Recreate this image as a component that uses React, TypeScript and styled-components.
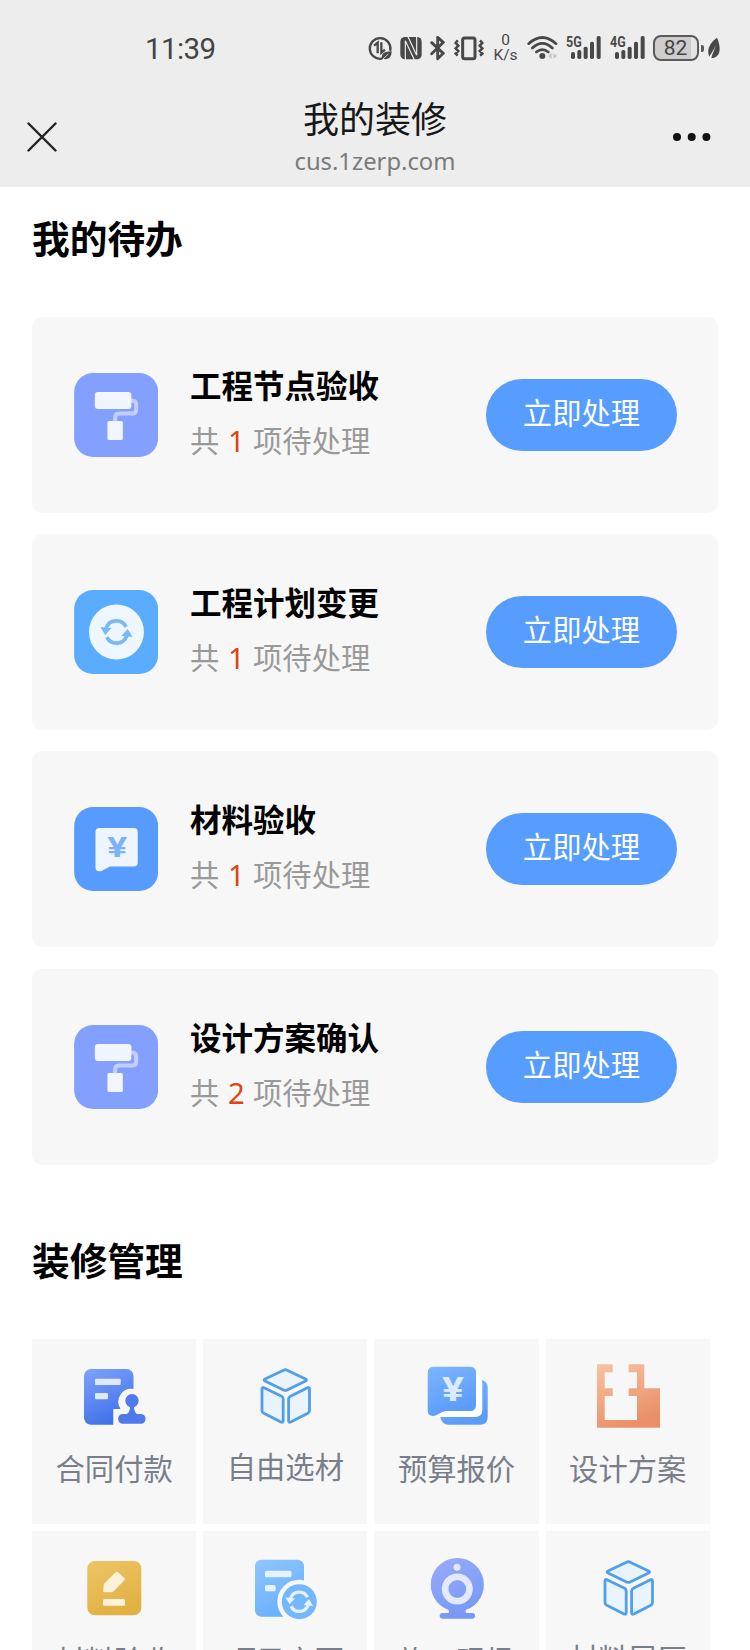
import React from "react";
import styled, { createGlobalStyle } from "styled-components";

const GlobalStyle = createGlobalStyle`
  * { box-sizing: border-box; }
  body {
    margin: 0;
    background: #fff;
    font-family: "Noto Sans", "Noto Sans CJK SC", sans-serif;
  }
  svg { display: block; flex: none; }
`;

const Screen = styled.div`
  width: 750px;
  height: 1650px;
  overflow: hidden;
  background: #fff;
`;

const Header = styled.header`
  height: 187px;
  background: #ededed;
`;

const StatusBar = styled.div`
  height: 96px;
  padding: 0 29.5px 0 145px;
  display: flex;
  align-items: center;
  justify-content: space-between;
`;

const Clock = styled.time`
  padding-top: 2px;
  font: 400 29.5px/34px Roboto, sans-serif;
  letter-spacing: -0.6px;
  color: #444;
`;

const StatusIcons = styled.div`
  display: flex;
  align-items: center;
`;

const Glyph = styled.svg<{ $gap?: number }>`
  margin-left: ${(p) => p.$gap ?? 8}px;
  color: #484848;
`;

const Speed = styled.div`
  width: 23px;
  margin-left: 10px;
  display: flex;
  flex-direction: column;
  align-items: center;
  font: 400 15.5px/15px Roboto, sans-serif;
  color: #484848;
`;

const Battery = styled.div`
  width: 46px;
  height: 26px;
  margin-left: 8px;
  border: 2px solid #5a5a5a;
  border-radius: 8px;
  background: linear-gradient(90deg, #cdcdcd 86%, #e4e4e4 86%);
  font: 400 21px/23px Roboto, sans-serif;
  color: #444;
  text-align: center;
`;

const BatteryTip = styled.span`
  width: 3px;
  height: 7px;
  margin-left: 2px;
  border-radius: 0 2px 2px 0;
  background: #5a5a5a;
`;

const NavBar = styled.nav`
  height: 81px;
  padding: 0 38px 0 27px;
  display: grid;
  grid-template-columns: 40px 1fr 30px;
  grid-template-rows: 81px;
  align-items: center;
`;

const MoreButton = styled.div`
  display: flex;
  justify-content: flex-end;
`;

const NavTitle = styled.div`
  display: flex;
  flex-direction: column;
  align-items: center;
  padding: 4px 0 0 1px;
`;

const PageName = styled.h1`
  margin: 0;
  font-size: 36px;
  line-height: 44px;
  font-weight: 400;
  color: #171717;
`;

const Host = styled.div`
  font-size: 23.8px;
  line-height: 38px;
  color: #7b7b7b;
`;

const SectionTitle = styled.h2<{ $top: number }>`
  margin: ${(p) => p.$top}px 0 0 32px;
  font-size: 37.7px;
  line-height: 50px;
  font-weight: 700;
  color: #000;
`;

const TodoList = styled.div`
  margin: 52.5px 32px 0;
  display: flex;
  flex-direction: column;
  gap: 21.2px;
`;

const TodoCard = styled.article`
  height: 196.2px;
  padding: 0 41.3px 0 41.7px;
  display: flex;
  align-items: center;
  border-radius: 10px;
  background: #f7f7f7;
`;

const TodoText = styled.div`
  flex: 1;
  margin: -3px 0 0 32px;
`;

const TodoTitle = styled.h3`
  margin: 0;
  font-size: 31.5px;
  line-height: 44px;
  font-weight: 700;
  color: #000;
`;

const TodoCount = styled.p`
  margin: 11px 0 0;
  font-size: 29.3px;
  line-height: 44px;
  color: #999;
`;

const Count = styled.span`
  margin: 0 8.3px 0 8.7px;
  color: #dc4414;
`;

const ActionButton = styled.button`
  width: 190.5px;
  height: 72px;
  padding: 0 0 4px;
  border: 0;
  border-radius: 36px;
  background: #569dff;
  color: #fff;
  font: 400 29.3px/44px "Noto Sans", "Noto Sans CJK SC", sans-serif;
`;

const Grid = styled.div`
  margin: 53px 0 0 32px;
  display: grid;
  grid-template-columns: repeat(4, 164.3px);
  grid-auto-rows: 185.4px;
  gap: 6.9px;
`;

const Tile = styled.div`
  padding-top: 25.3px;
  display: flex;
  flex-direction: column;
  align-items: center;
  background: #f7f7f7;
`;

const TileLabel = styled.span<{ $raised?: boolean }>`
  margin-top: ${(p) => (p.$raised ? 17 : 19)}px;
  font-size: 29.3px;
  line-height: 44px;
  color: #787e8a;
`;

const Signal = ({ label, gap }: { label: string; gap: number }) => (
  <Glyph $gap={gap} width="35" height="28" viewBox="0 0 105 84" fill="currentColor">
    <text x="0" y="40" fontFamily="Roboto" fontWeight="700" fontSize="43" textLength="47" lengthAdjust="spacingAndGlyphs">{label}</text>
    <rect x="15" y="54" width="12" height="21" rx="5" />
    <rect x="34" y="48" width="12" height="27" rx="5" />
    <rect x="53" y="38" width="12" height="37" rx="5" />
    <rect x="72" y="23" width="12" height="52" rx="5" />
    <rect x="92" y="6" width="12" height="69" rx="5" />
  </Glyph>
);

const StatusGlyphs = () => (
  <StatusIcons>
    <Glyph $gap={0} width="25" height="28" viewBox="0 0 75 84" fill="none" stroke="currentColor" strokeWidth="7">
      <path d="M41 74A31 31 0 1 1 67 48" strokeLinecap="round" />
      <path d="M18 35l11-9v32M40 25v31l11-9" />
      <path d="M42 76c-3-19 7-23 29-24c0 19-11 27-26 22z" fill="currentColor" stroke="none" />
      <path d="M43 77l18-17" stroke="#ededed" strokeWidth="2.500" />
    </Glyph>
    <Glyph $gap={7} width="22" height="28" viewBox="0 0 66 84">
      <rect x="1" y="9" width="64" height="67" rx="14" fill="currentColor" />
      <path d="M16 77V20L43 77M50 8V64L24 8" fill="none" stroke="#ededed" strokeWidth="3.500" />
    </Glyph>
    <Glyph width="16" height="28" viewBox="0 0 48 84" fill="none" stroke="currentColor" strokeWidth="8.500" strokeLinejoin="round" strokeLinecap="round">
      <path d="M5 26l35 32l-17 16V10l17 15L5 59" />
    </Glyph>
    <Glyph width="30" height="28" viewBox="0 0 90 84" fill="none" stroke="currentColor" strokeWidth="7">
      <rect x="26" y="12" width="37" height="62" rx="6" strokeWidth="9" />
      <path d="M11 19l-6 8l8 8l-8 8l8 8l-8 8l6 6M78 19l7 8l-8 8l8 8l-8 8l8 8l-7 6" strokeWidth="7.500" />
    </Glyph>
    <Speed>
      <span>0</span>
      <span>K/s</span>
    </Speed>
    <Glyph $gap={10} width="31" height="28" viewBox="0 0 93 84" fill="none" stroke="currentColor" strokeWidth="8" strokeLinecap="round">
      <path d="M5 29Q46-8 87 29M16 42Q46 14 76 42M28 54Q46 40 64 54" />
      <circle cx="46" cy="66" r="9" fill="currentColor" stroke="none" />
      <path d="M74 57v18l-11-9zM79 57v18l11-9z" fill="#c4c4c4" stroke="none" />
    </Glyph>
    <Signal label="5G" gap={8} />
    <Signal label="4G" gap={8.5} />
    <Battery>82</Battery>
    <BatteryTip />
    <Glyph $gap={4} width="13" height="28" viewBox="0 0 39 84">
      <path d="M27 11C5 26-5 49 4 68C9 60 17 47 24 33C19 48 13 59 10 72C34 72 43 48 27 11z" fill="currentColor" />
    </Glyph>
  </StatusIcons>
);

const cardIcon = { width: 84.3, height: 84, viewBox: "0 0 84 84" };

const RollerIcon = () => (
  <svg {...cardIcon}>
    <rect width="84" height="84" rx="19" fill="#83a0ff" />
    <path d="M56 27.500h2q4 0 4 4v5q0 4-4 4H45q-4 0-4 4v4" fill="none" stroke="#c2cfff" strokeWidth="4" />
    <rect x="20.700" y="19" width="36.500" height="17" rx="3" fill="#f1f5ff" />
    <rect x="33.300" y="48" width="15.400" height="19" rx="1.500" fill="#f1f5ff" />
  </svg>
);

const CycleArrows = ({ color }: { color: string }) => (
  <g fill="none" stroke={color} strokeWidth="3.800">
    <path d="M-10.400-3.500A10.800 10.800 0 0 1 9.600-5.200M10.400 3.500A10.800 10.800 0 0 1-9.600 5.200" />
    <path d="M-16-5L-5-3.700L-11.300 3zM16 5L5 3.700L11.300-3z" fill={color} stroke="none" />
  </g>
);

const ChangeIcon = () => (
  <svg {...cardIcon}>
    <rect width="84" height="84" rx="19" fill="#5aacff" />
    <circle cx="42.300" cy="42" r="27.500" fill="#eef6ff" />
    <g transform="translate(42.300 42)"><CycleArrows color="#79b8fa" /></g>
  </svg>
);

const MaterialIcon = () => (
  <svg {...cardIcon}>
    <rect width="84" height="84" rx="19" fill="#579bfe" />
    <path d="M25.300 21h34.300a4 4 0 0 1 4 4v30.500a4 4 0 0 1-4 4H36l-8 4.200q-6.700 2.300-6.700-4V25a4 4 0 0 1 4-4z" fill="#eff5ff" />
    <text x="33.200" y="50" fontFamily="Roboto" fontWeight="700" fontSize="28" textLength="20" lengthAdjust="spacingAndGlyphs" fill="#7cb2f9">¥</text>
  </svg>
);

const Fade = ({ id, from, to }: { id: string; from: string; to: string }) => (
  <defs>
    <linearGradient id={id} x1="0" y1="0" x2="0.4" y2="1">
      <stop offset="0" stopColor={from} />
      <stop offset="1" stopColor={to} />
    </linearGradient>
  </defs>
);

const tileIcon = { width: 64, height: 64, viewBox: "0 0 64 64" };

const ContractIcon = () => (
  <svg {...tileIcon}>
    <Fade id="contract" from="#7ea3fa" to="#4273ea" />
    <path d="M9 5h35.500a7 7 0 0 1 7 7v13A13 13 0 0 0 38.500 45H31.300V60.700H9a7 7 0 0 1-7-7V12a7 7 0 0 1 7-7z" fill="url(#contract)" />
    <rect x="13" y="14.700" width="25.700" height="6.300" rx="1" fill="#dfe9fe" />
    <rect x="13" y="29" width="13" height="6.300" rx="1" fill="#dfe9fe" />
    <circle cx="50" cy="36.800" r="6.700" fill="#5079ec" />
    <path d="M48 42h4q0 6 3 8h4a4.500 4.500 0 0 1 4.500 4.500v.7a4.500 4.500 0 0 1-4.500 4.500H40.700a4.500 4.500 0 0 1-4.500-4.500v-.7a4.500 4.500 0 0 1 4.500-4.500H45q3-2 3-8z" fill="#5079ec" />
  </svg>
);

const CubeIcon = () => (
  <svg {...tileIcon} fill="#eaf4ff" stroke="#519fe8" strokeWidth="2.800" strokeLinejoin="round">
    <path d="M30.500 6.200Q32.300 5.300 34.100 6.200L52.600 15Q54.400 16 52.600 17L34.100 26Q32.300 26.900 30.500 26L12 17Q10.200 16 12 15z" />
    <path d="M11 23.800L28.600 32.300Q30.200 33.300 30.200 35V56.600Q30.200 59 28 58L10.800 49.300Q9 48.300 9 46.500V25Q9 22.800 11 23.800z" />
    <path d="M54.500 23.800L37.500 32.300Q35.600 33.300 35.600 35V56.600Q35.600 59 37.800 58L54.800 49.300Q56.500 48.300 56.500 46.500V25Q56.500 22.800 54.500 23.800z" />
  </svg>
);

const QuoteIcon = () => (
  <svg {...tileIcon}>
    <Fade id="quote" from="#7db5fd" to="#5b9cf9" />
    <path d="M51 16h3.500q8.200 0 8.200 8.200V53q0 7.700-7.700 7.700H24q-7.500 0-8.700-7.700V48z" fill="url(#quote)" />
    <path d="M51 10q6.300 4 6.300 10v26q0 7-7 7H12V46z" fill="#fff" />
    <path d="M8.200 2.700h37.300a5.500 5.500 0 0 1 5.500 5.500v33.300a5.500 5.500 0 0 1-5.500 5.500H21q-3 0-7 2.800l-3.500 1.800q-7.800 1.500-7.800-4.500V8.200a5.500 5.500 0 0 1 5.500-5.500z" fill="url(#quote)" />
    <text x="17" y="36.500" fontFamily="Roboto" fontWeight="700" fontSize="33" textLength="22" lengthAdjust="spacingAndGlyphs" fill="#dcebff">¥</text>
  </svg>
);

const PlanIcon = () => (
  <svg {...tileIcon}>
    <Fade id="plan" from="#f8c2a2" to="#ea9069" />
    <path d="M1 .3H16.700V8.300H8.700V24.300H16.700V32H8.700V56H41V32H32.700V24.300H41V8.300H32.700V.3H48.300V24.300H64V63.700H1z" fill="url(#plan)" />
  </svg>
);

const AcceptIcon = () => (
  <svg {...tileIcon}>
    <Fade id="accept" from="#edc566" to="#e2b144" />
    <rect x="5.300" y="5" width="54" height="54.300" rx="7.500" fill="url(#accept)" />
    <path d="M33.500 16.300q1.200-1.200 2.400 0l6.300 5.700q1.300 1.200 0 2.400L31.500 35.500q-.8.800-2 .8H22.300q-1 0-1-1l.3-6q.1-1 .8-1.700z" fill="#fbf2dc" />
    <rect x="21" y="43" width="22" height="6.700" rx="1.500" fill="#fbf2dc" />
  </svg>
);

const ProjectIcon = () => (
  <svg {...tileIcon}>
    <Fade id="project" from="#8fc5ff" to="#69b2fb" />
    <rect x="2" y="3.700" width="49" height="57" rx="6.500" fill="url(#project)" />
    <rect x="12" y="14.700" width="26.500" height="6.500" rx="1.500" fill="#e4f2ff" />
    <rect x="12" y="29" width="10.700" height="6.300" rx="1.500" fill="#e4f2ff" />
    <circle cx="46.300" cy="45.700" r="22" fill="#f7f7f7" />
    <circle cx="46.300" cy="45.700" r="17.500" fill="#74b7fb" />
    <g transform="translate(46.300 45.700) scale(.86)"><CycleArrows color="#e4f2ff" /></g>
  </svg>
);

const CameraIcon = () => (
  <svg {...tileIcon}>
    <Fade id="camera" from="#98acfb" to="#7899f4" />
    <path d="M32.300 2a26.700 26.700 0 0 1 9.500 51.600q-2 .9-.8 3.400h6.200a2.850 2.850 0 0 1 0 5.700H17.500a2.850 2.850 0 0 1 0-5.700h6.200q1-2.500-.9-3.400A26.700 26.700 0 0 1 32.300 2z" fill="url(#camera)" />
    <circle cx="32" cy="11.300" r="3.500" fill="#e3e9fe" />
    <circle cx="32.300" cy="33" r="12.200" fill="none" stroke="#e3e9fe" strokeWidth="6.600" />
  </svg>
);

const todos = [
  { title: "工程节点验收", count: 1, Icon: RollerIcon },
  { title: "工程计划变更", count: 1, Icon: ChangeIcon },
  { title: "材料验收", count: 1, Icon: MaterialIcon },
  { title: "设计方案确认", count: 2, Icon: RollerIcon },
];

const tiles = [
  { label: "合同付款", Icon: ContractIcon },
  { label: "自由选材", Icon: CubeIcon, raised: true },
  { label: "预算报价", Icon: QuoteIcon },
  { label: "设计方案", Icon: PlanIcon },
  { label: "材料验收", Icon: AcceptIcon },
  { label: "项目变更", Icon: ProjectIcon },
  { label: "施工现场", Icon: CameraIcon },
  { label: "材料展厅", Icon: CubeIcon, raised: true },
];

export default function App() {
  return (
    <Screen>
      <GlobalStyle />
      <Header>
        <StatusBar>
          <Clock>11:39</Clock>
          <StatusGlyphs />
        </StatusBar>
        <NavBar>
          <svg width="30" height="30" viewBox="0 0 30 30" stroke="#222" strokeWidth="2.400" strokeLinecap="round">
            <path d="M1.500 1.500l27 27M28.500 1.500l-27 27" />
          </svg>
          <NavTitle>
            <PageName>我的装修</PageName>
            <Host>cus.1zerp.com</Host>
          </NavTitle>
          <MoreButton>
            <svg width="40" height="10" viewBox="0 0 40 10" fill="#111">
              <circle cx="5" cy="5" r="4" />
              <circle cx="19.700" cy="5" r="4" />
              <circle cx="34.400" cy="5" r="4" />
            </svg>
          </MoreButton>
        </NavBar>
      </Header>
      <SectionTitle $top={27}>我的待办</SectionTitle>
      <TodoList>
        {todos.map(({ title, count, Icon }) => (
          <TodoCard key={title}>
            <Icon />
            <TodoText>
              <TodoTitle>{title}</TodoTitle>
              <TodoCount>共<Count>{count}</Count>项待处理</TodoCount>
            </TodoText>
            <ActionButton>立即处理</ActionButton>
          </TodoCard>
        ))}
      </TodoList>
      <SectionTitle $top={71}>装修管理</SectionTitle>
      <Grid>
        {tiles.map(({ label, Icon, raised }) => (
          <Tile key={label}>
            <Icon />
            <TileLabel $raised={raised}>{label}</TileLabel>
          </Tile>
        ))}
      </Grid>
    </Screen>
  );
}
